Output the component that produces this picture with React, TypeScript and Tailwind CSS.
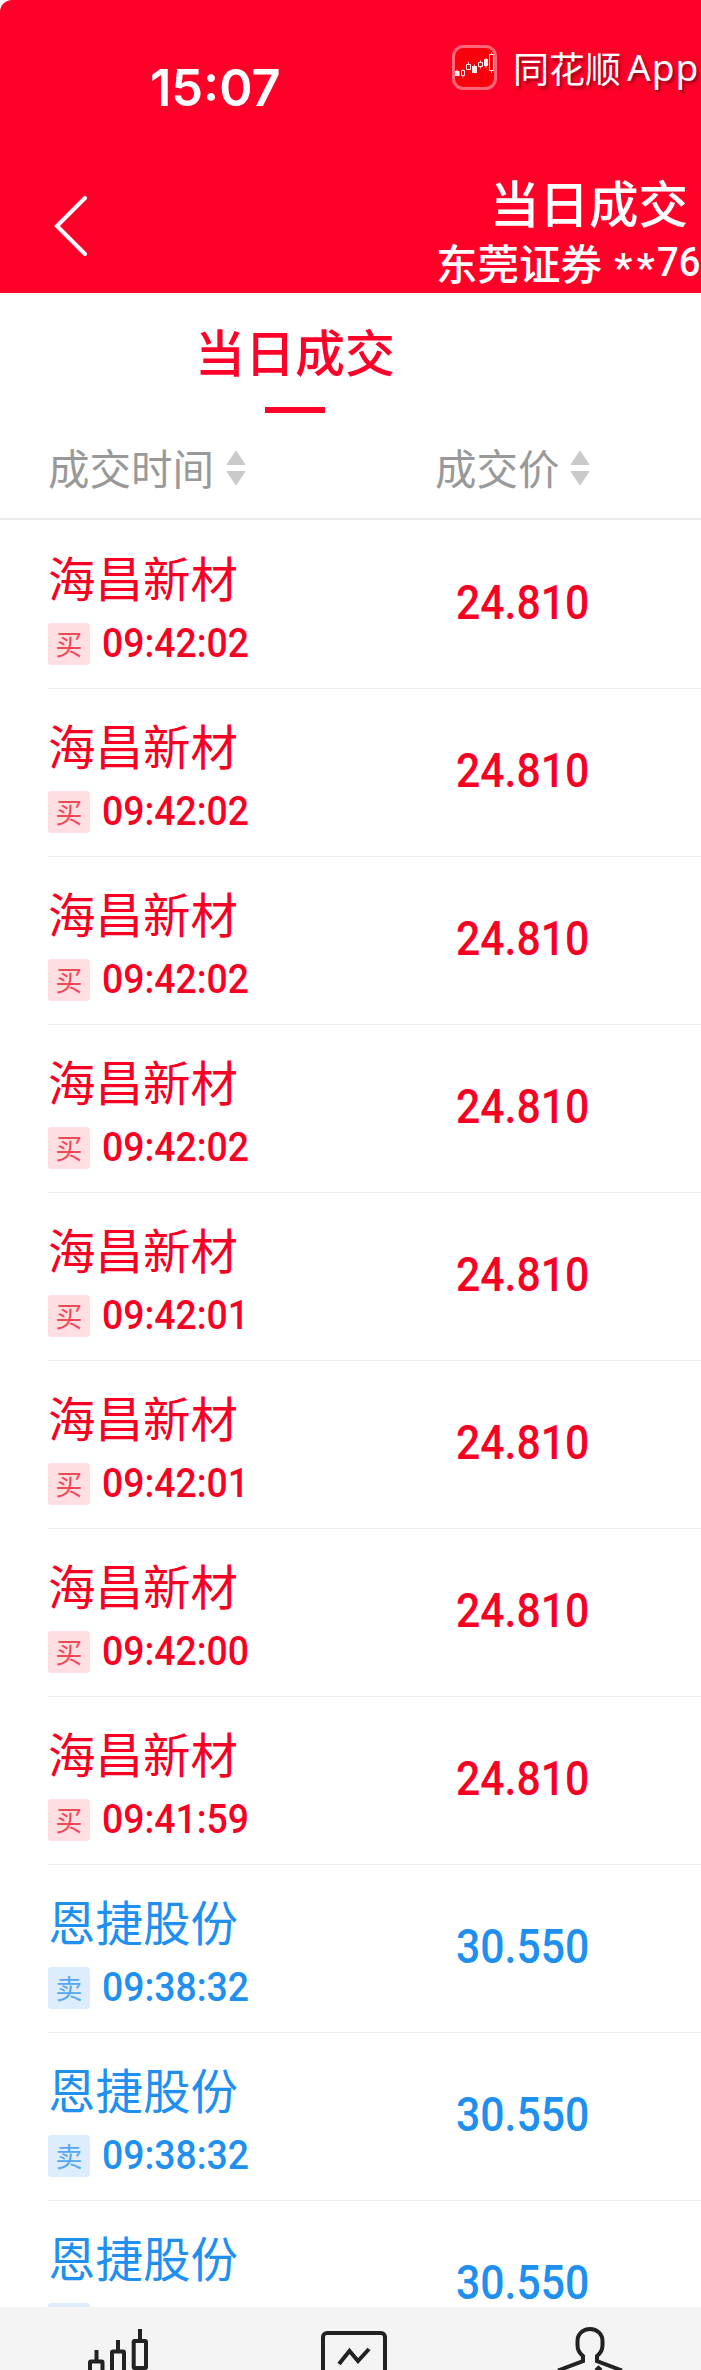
import React from 'react';
import { clsx } from 'clsx';

type Trade = {
  name: string;
  side: 'buy' | 'sell';
  time: string;
  price: string;
};

const TRADES: Trade[] = [
  { name: '海昌新材', side: 'buy', time: '09:42:02', price: '24.810' },
  { name: '海昌新材', side: 'buy', time: '09:42:02', price: '24.810' },
  { name: '海昌新材', side: 'buy', time: '09:42:02', price: '24.810' },
  { name: '海昌新材', side: 'buy', time: '09:42:02', price: '24.810' },
  { name: '海昌新材', side: 'buy', time: '09:42:01', price: '24.810' },
  { name: '海昌新材', side: 'buy', time: '09:42:01', price: '24.810' },
  { name: '海昌新材', side: 'buy', time: '09:42:00', price: '24.810' },
  { name: '海昌新材', side: 'buy', time: '09:41:59', price: '24.810' },
  { name: '恩捷股份', side: 'sell', time: '09:38:32', price: '30.550' },
  { name: '恩捷股份', side: 'sell', time: '09:38:32', price: '30.550' },
  { name: '恩捷股份', side: 'sell', time: '09:38:32', price: '30.550' },
];

function AppLogo() {
  return (
    <svg className="h-[45px] w-[45px] shrink-0" viewBox="0 0 45 45" fill="none">
      <rect x="1.5" y="1.5" width="42" height="42" rx="10" fill="#f8000c" stroke="#ff6678" strokeWidth="3" />
      <path d="M5 24.500v2M11 24.500v8M16.500 17v3M22.500 19.500v3M28.500 15.500v8M34 13v10M39.500 7v21" stroke="#ffc4c8" strokeWidth="1" />
      <path d="M3 26h4.500v5H3zM20 21h5v7h-5zM32 14h4v7h-4z" fill="#ffeceb" />
      <path d="M9.500 25.500h3v5h-3zM14.500 19.500h4v5h-4zM26.500 17.500h4v4h-4zM37.500 9.500h4v16h-4z" fill="#f8000c" stroke="#ffeceb" />
    </svg>
  );
}

function SortIcon() {
  return (
    <svg className="h-9 w-5" viewBox="0 0 20 36" fill="#cacaca" stroke="#cacaca" strokeLinejoin="round">
      <path d="M10 1L1 14.500h18z" />
      <path d="M10 35L1 21.500h18z" />
    </svg>
  );
}

function Header() {
  return (
    <header className="flex h-[293px] shrink-0 flex-col rounded-tl-[12px] bg-[#ff0028] text-white">
      <div className="flex h-[136px] shrink-0 items-start">
        <div className="w-[452px] pt-[57px] pl-[150px] font-[Inter] text-[50.500px] leading-[62px] font-semibold">15:07</div>
        <div className="flex items-center gap-4 pt-[42px]">
          <AppLogo />
          <div className="flex items-center gap-1.5 text-[36px] leading-[50px] [text-shadow:2px_3px_3px_rgba(90,0,20,0.6)]">
            <span>同花顺</span>
            <span className="font-['Noto_Sans'] text-[37px] tracking-[1px]">App</span>
          </div>
        </div>
      </div>
      <div className="flex">
        <svg className="mt-[58px] ml-[52px] h-16 w-10 shrink-0" viewBox="0 0 40 64" fill="none" stroke="#fff" strokeWidth="4" strokeLinecap="round">
          <path d="M33 4L5 32l28 28" />
        </svg>
        <div className="ml-[345px] flex flex-col whitespace-nowrap">
          <h1 className="mt-[36px] ml-[53px] text-[49.500px] leading-[60px] font-medium">当日成交</h1>
          <p className="-ml-px flex text-[41.500px] leading-[60px] font-medium">
            <span>东莞证券</span>
            <span className="mt-1.5 ml-3 font-[Roboto] tracking-[4px]">**</span>
            <span className="-ml-0.5 origin-left scale-x-[0.92] font-[Roboto]">76</span>
          </p>
        </div>
      </div>
    </header>
  );
}

function TradeRow({ trade }: { trade: Trade }) {
  const buy = trade.side === 'buy';
  return (
    <li className={clsx('ml-12 flex h-[168px] border-b border-[#ececec]', buy ? 'text-[#f80023]' : 'text-[#2090f0]')}>
      <div className="w-[408px] pt-[22px]">
        <div className="text-[47.500px] leading-[68px]">{trade.name}</div>
        <div className="mt-[11px] flex items-center">
          <span
            className={clsx(
              'flex h-[42px] w-[42px] items-center justify-center rounded-[3px] pb-0.5 text-[27px] leading-none',
              buy ? 'bg-[#ffdfe1] text-[#f4475a]' : 'bg-[#deedfd] text-[#56a8f2]',
            )}
          >
            {buy ? '买' : '卖'}
          </span>
          <span className="mb-0.5 ml-3 origin-left scale-x-[0.91] font-[Roboto] text-[41px] leading-[42px] font-medium">{trade.time}</span>
        </div>
      </div>
      <div className="origin-left scale-x-[0.89] pt-[54px] font-[Roboto] text-[48px] leading-[56px] font-medium">{trade.price}</div>
    </li>
  );
}

function BottomNav() {
  return (
    <nav className="flex h-[63px] shrink-0 bg-[#f4f4f4]">
      <svg className="h-[63px] w-[701px]" viewBox="0 0 701 63" fill="none" stroke="#222" strokeWidth="4">
        <path d="M96.500 43v11M118 33v11M140 22v12" />
        <rect x="90" y="54.500" width="12.500" height="28" rx="1" />
        <rect x="112" y="44.500" width="12" height="34" rx="1" />
        <rect x="133.700" y="34" width="12.300" height="27" rx="1" />
        <rect x="323" y="26" width="62" height="58" rx="4" />
        <path d="M339 57L349.500 44L358 54L369 42" />
        <path d="M558 63.500L583 54V49C579 46 577.500 43 577.500 38V34C577.500 27 583 22 590 22S602.500 27 602.500 34V38C602.500 43 601 46 597 49V54L622 63.500" />
        <path d="M596 63.500l2.500-2.500 2.500 2.500" />
      </svg>
    </nav>
  );
}

export default function App() {
  return (
    <div className="flex h-[2370px] w-[701px] flex-col overflow-hidden bg-white font-['Noto_Sans_CJK_SC',sans-serif]">
      <Header />

      {/* tab + column titles */}
      <div className="mb-px h-[227px] shrink-0 border-b-2 border-[#ececec]">
        <div className="ml-[196px] flex w-[198px] flex-col items-center whitespace-nowrap text-[#ff0028]">
          <span className="pt-[23px] text-[50px] leading-[68px] font-medium">当日成交</span>
          <span className="mt-[23px] h-[6px] w-[60px] bg-[#ff0028]" />
        </div>
        <div className="mt-[30px] ml-12 flex text-[41.500px] leading-[52px] text-[#999]">
          <div className="flex w-[387px] items-center gap-3">
            <span className="-mt-0.5">成交时间</span>
            <SortIcon />
          </div>
          <div className="flex items-center gap-2.5">
            <span className="-mt-0.5">成交价</span>
            <SortIcon />
          </div>
        </div>
      </div>

      <ul className="min-h-0 flex-1 overflow-hidden">
        {TRADES.map((trade, i) => (
          <TradeRow key={i} trade={trade} />
        ))}
      </ul>

      <BottomNav />
    </div>
  );
}
